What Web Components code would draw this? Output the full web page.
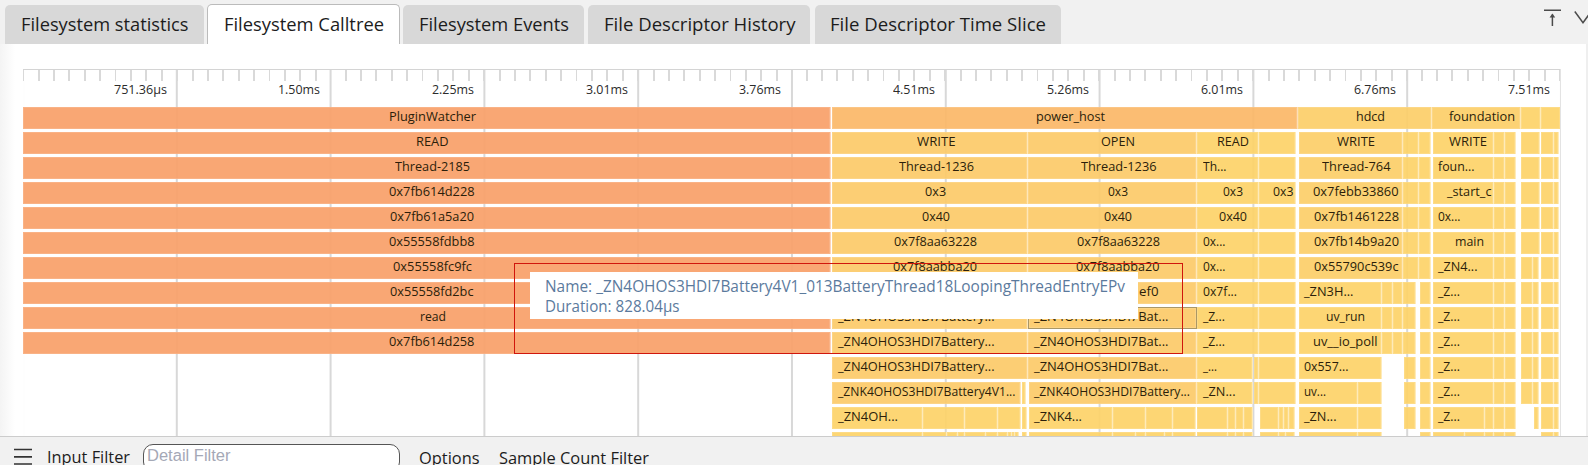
<!DOCTYPE html>
<html lang="en"><head><meta charset="utf-8"><title>Filesystem Calltree</title>
<style>
html,body{margin:0;height:100%;overflow:hidden;background:#fff}
body{font-family:"Open Sans","Noto Sans",sans-serif;color:#1c1c1c}
</style></head><body>
<trace-panel></trace-panel>
<script>
const define=(name,html,setup)=>customElements.define(name,class extends HTMLElement{
  connectedCallback(){
    if(this.shadowRoot)return;
    const t=document.createElement('template');t.innerHTML=html;
    this.attachShadow({mode:'open'}).append(t.content.cloneNode(true));
    if(setup)setup.call(this,this.shadowRoot);
  }
});

/* Text run condensed or widened to a given width */
define('fit-text',`<style>:host{display:block;flex:none;white-space:pre}span{display:inline-block;transform-origin:0 50%}</style><span><slot></slot></span>`,function(r){
  const w=+this.getAttribute('w'),s=r.querySelector('span');
  this.style.width=w+'px';
  s.style.transform='scaleX('+w/s.getBoundingClientRect().width+')';
});

define('tab-item',`<style>
:host{display:flex;box-sizing:border-box;flex:none;height:39px;border-radius:5px 5px 0 0;background:#d8d8d8;font-size:18.4px;line-height:38px}
:host([active]){background:#fff;height:40px;border:1px solid #bbb;border-bottom:0;line-height:38px}
</style><slot></slot>`,function(){
  this.style.width=this.getAttribute('width')+'px';
  this.style.marginLeft=this.getAttribute('gap')+'px';
  this.style.paddingLeft=this.getAttribute('pad')+'px';
});

define('tab-bar',`<style>
:host{display:flex;height:44px;flex:none;background:#f1f1f1;align-items:flex-end;overflow:hidden}
svg{margin-left:auto;align-self:flex-start;flex:none}
</style>
<tab-item gap="5" width="199" pad="16"><fit-text w="167.5">Filesystem statistics</fit-text></tab-item>
<tab-item active gap="3" width="193" pad="15.5"><fit-text w="160">Filesystem Calltree</fit-text></tab-item>
<tab-item gap="3" width="181" pad="15.5"><fit-text w="150">Filesystem Events</fit-text></tab-item>
<tab-item gap="4" width="222" pad="16"><fit-text w="191.5">File Descriptor History</fit-text></tab-item>
<tab-item gap="5" width="246" pad="15"><fit-text w="216">File Descriptor Time Slice</fit-text></tab-item>
<svg width="48" height="40" viewBox="0 0 48 40" fill="none" stroke="#4b4b4b" stroke-width="1.5"><path d="M4 10.2H21M12.4 26V14.5"/><path d="M9.6 17.6L12.4 13.6L15.2 17.6Z" fill="#4b4b4b" stroke="none"/><path d="M34.8 11.5L43 22.7L51.2 11.5"/></svg>`);

define('time-ruler',`<style>
:host{display:grid;grid-template-columns:repeat(10,1fr);height:38px;flex:none;border-top:1px solid #d4d4d4;box-sizing:border-box;font-size:12.8px;color:#2b2b2b}
div{display:flex;justify-content:flex-end;padding:9px 10px 0 0;line-height:20px;
background:repeating-linear-gradient(90deg,#d9d9d9 0 1.2px,transparent 1.2px 14.7px,#d9d9d9 14.7px 15.38px) 0 0/100% 11px no-repeat}
</style>`,function(r){
  for(const [t,w] of [['751.36µs',53],['1.50ms',42],['2.25ms',42],['3.01ms',42],['3.76ms',42],['4.51ms',42],['5.26ms',42],['6.01ms',42],['6.76ms',42],['7.51ms',42]]){
    const d=document.createElement('div');
    d.innerHTML='<fit-text w="'+w+'">'+t+'</fit-text>';r.append(d);
  }
});

define('flame-cell',`<style>
:host{display:flex;box-sizing:border-box;flex:none;height:22px;background:var(--c);border-right:1px solid rgba(255,255,255,.5);box-shadow:inset 0 0 0 1px rgba(255,255,255,.13);font-size:12.6px;line-height:20.6px;color:#2b1e0a}
:host([selected]){border:1px solid #aa9765;line-height:18.6px}
</style><slot></slot>`);

const C={o:'rgba(249,160,105,.93)',p:'rgba(251,183,103,.92)',w:'rgba(252,202,104,.92)',y:'rgba(253,211,104,.92)',h:'rgba(252,206,104,.92)'};
/* cell: [start, end, colour, label, label start, label end] */
const orange=[['PluginWatcher',389.7,476.7],['READ',416,448.5],['Thread-2185',395,470],['0x7fb614d228',389.3,475],['0x7fb61a5a20',390.5,474.5],['0x55558fdbb8',389.5,475],['0x55558fc9fc',393,472],['0x55558fd2bc',390.5,474],['read',420,446],['0x7fb614d258',389.3,474.7]];
const bat='_ZN4OHOS3HDI7Battery...',ba='_ZN4OHOS3HDI7Bat...';
const A=[0,['WRITE',917,955.5],['Thread-1236',899,974],['0x3',925.5,946.5],['0x40',922,950],['0x7f8aa63228',894.5,977.5],['0x7f8aabba20',893,977],[],[bat,838,994.5],[bat,838,994.5],[bat,838,994.5],['_ZNK4OHOS3HDI7Battery4V1...',838,1015.5],['_ZN4OH...',838,898]];
const B=[0,['OPEN',1101,1135],['Thread-1236',1081,1156.5],['0x3',1108.5,1128.5],['0x40',1104.5,1132.5],['0x7f8aa63228',1077,1160],['0x7f8aabba20',1076,1159.5],['ef0',1139,1158.5],[ba,1034,1168.5],[ba,1034,1168.5],[ba,1034,1168.5],['_ZNK4OHOS3HDI7Battery...',1034,1190],['_ZNK4...',1034,1082]];
const D=[0,['READ',1217.5,1249.5],['Th...',1203.5,1227],['0x3',1223.5,1243.5],['0x40',1219.5,1247.5],['0x...',1203.5,1226],['0x...',1203.5,1226],['0x7f...',1203,1237],['_Z...',1203.5,1225.5],['_Z...',1203.5,1225.5],['_...',1203.5,1217.5],['_ZN...',1203.5,1236]];
const H=[['hdcd',1356,1385],['WRITE',1337,1375],['Thread-764',1322,1390.5],['0x7febb33860',1313,1398.5],['0x7fb1461228',1314.5,1399.5],['0x7fb14b9a20',1314.5,1399.5],['0x55790c539c',1314.5,1399],['_ZN3H...',1304.5,1354],['uv_run',1326,1365],['uv__io_poll',1313.5,1378],['0x557...',1304.5,1349],['uv...',1304.5,1326.5],['_ZN...',1304.5,1337]];
const z=['_Z...',1438.5,1460.5];
const F=[['foundation',1449.5,1515.5],['WRITE',1449.5,1487.5],['foun...',1438.5,1475],['_start_c',1447,1491.5],['0x...',1438.5,1461],['main',1455,1484],['_ZN4...',1438.5,1478],z,z,z,z,z,z];
function split(c,edges,label){return edges.slice(0,-1).map((e,i)=>[e,edges[i+1],c,...(i===0&&label?label:[])]);}
const rows=[];
for(let i=0;i<14;i++){
  let r=[];
  if(i<10)r.push([23,831,'o',...orange[i]]);
  if(i===0){r.push([832,1298,'p','power_host',1036,1105],[1298,1432,'h',...H[0]],[1432,1521,'h',...F[0]],[1521,1541,'y'],[1541,1561,'y']);rows.push(r);continue;}
  if(i<11)r.push([832,1028,'w',...A[i]],[1028,1197,'w',...B[i]]);
  else if(i===11)r.push([832,1021,'w',...A[i]],[1022,1026,'y'],[1029,1197,'w',...B[i]]);
  else if(i===12)r.push(...split('y',[832,923,965,998,1021],A[i]),[1022,1027,'y'],...split('y',[1029,1113,1146,1173,1196],B[i]));
  else r.push(...split('y',[832,923,947,958,965,986,998,1008,1012,1015,1019]),[1022,1027,'y'],...split('y',[1029,1113,1136,1146,1165,1173,1196]));
  if(i<10)r.push([1197,1259,'y',...D[i]],[1259,1296,'y',...(i===3?['0x3',1273.5,1294]:[])]);
  else if(i<12)r.push([1197,1253,'y',...D[i]],[1254,1259,'y'],[1259,1296,'y']);
  else r.push(...split('y',[1197,1228,1236,1244,1253]),...split('y',i===12?[1260,1279,1284,1289,1295]:[1260,1279,1286,1295]));
  if(i<7)r.push([1299,1403,'h',...H[i]],...split('y',[1403,1419,1431]));
  else{
    if(i<10)r.push(...split('y',[1299,1382,1393,1403],H[i]),[1403,1416,'y']);
    else if(i===10)r.push([1299,1382,'y',...H[i]],[1404,1416,'y']);
    else{r.push(...split('y',[1299,1358,1382],H[i]));if(i<13)r.push([1404,1416,'y']);}
    r.push([1420,1431,'y']);
  }
  const tail=i<12?[1433,1494,1505,1516]:i===12?[1433,1485,1494,1505,1516]:[1433,1465,1485,1494,1505,1516];
  r.push(...split('y',tail,F[i]));
  if(i<6)r.push([1521,1540,'y']);
  else if(i<12)r.push(...split('y',[1521,1533,1539]));
  else if(i===12)r.push([1534,1539,'y']);
  r.push(...split('y',[1541,1554,1559]));
  if(i<12)r.push([1560,1561,'y']);
  rows.push(r);
}

define('flame-graph',`<style>
:host{display:flex;flex-direction:column;gap:3px;height:329px;overflow:hidden}
div{display:flex;height:22px;flex:none;position:relative}
</style>`,function(r){
  rows.forEach((cells,i)=>{
    const d=document.createElement('div');let at=23;
    for(const [a,b,c,t,l,m] of cells){
      const e=document.createElement('flame-cell');
      e.style.cssText='--c:'+C[c]+';width:'+(b-a)+'px;margin-left:'+(a-at)+'px';
      const sel=i===8&&a===1028;if(sel)e.setAttribute('selected','');
      if(t){e.style.paddingLeft=(l-a-(sel?1:0)-.4)+'px';const f=document.createElement('fit-text');f.setAttribute('w',m-l);f.textContent=t;e.append(f);}
      d.append(e);at=b;
    }
    r.append(d);
  });
});

define('hover-tip',`<style>
:host{position:absolute;left:530px;top:272px;width:608px;height:47px;box-sizing:border-box;padding:5px 0 0 14.5px;background:#fff;color:#5b7a9d;font-size:15.5px;line-height:19.6px}
</style><fit-text w="580">Name: _ZN4OHOS3HDI7Battery4V1_013BatteryThread18LoopingThreadEntryEPv</fit-text><fit-text w="134.5">Duration: 828.04µs</fit-text>`);

define('focus-frame',`<style>:host{position:absolute;left:514px;top:263px;width:669px;height:91px;box-sizing:border-box;border:1px solid #d0160c}</style>`);

define('filter-bar',`<style>
:host{display:flex;height:29px;flex:none;box-sizing:border-box;border-top:1px solid #ccc;background:#f1f1f1;font-size:16.6px;overflow:hidden;line-height:24px}
svg{flex:none;margin:11px 15px 0 14px}
.t{margin-top:8px}
.i{box-sizing:border-box;width:257px;height:28px;margin:7px 19px 0 13px;flex:none;border:1px solid #555;border-radius:10px;background:#fff;padding-left:3px;font:16px/22px "Liberation Sans",sans-serif;color:#a5a8b6}
.o{margin:9px 19px 0 0}
</style>
<svg width="18" height="18" stroke="#333" stroke-width="1.7"><path d="M0 1.5H18M0 8.8H18M0 16H18"/></svg>
<fit-text class="t" w="83">Input Filter</fit-text>
<div class="i"><fit-text w="83.5">Detail Filter</fit-text></div>
<fit-text class="o" w="60.5">Options</fit-text><fit-text class="o" w="150">Sample Count Filter</fit-text>`);

define('trace-panel',`<style>
:host{display:flex;flex-direction:column;width:1588px;height:465px;overflow:hidden;position:relative;background:#fff}
main{height:392px;flex:none;box-sizing:border-box;padding:25px 25px 0 23px;border-right:2px solid #efefef;background:linear-gradient(90deg,#f4f4f4,#fff 15px)}
section{width:1538px;height:367px;box-sizing:border-box;border-right:1px solid #e3e3e3;position:relative;
background:linear-gradient(90deg,#d8d8d8 1.5px,transparent 1.5px) -1px 0/153.8px 100%}
.hide{position:absolute;left:0;top:12px;width:2px;bottom:0;background:#fefefe}
time-ruler,flame-graph{position:relative}
</style>
<tab-bar></tab-bar><main><section><div class="hide"></div><time-ruler></time-ruler><flame-graph></flame-graph></section></main><filter-bar></filter-bar><focus-frame></focus-frame><hover-tip></hover-tip>`);
</script></body></html>
